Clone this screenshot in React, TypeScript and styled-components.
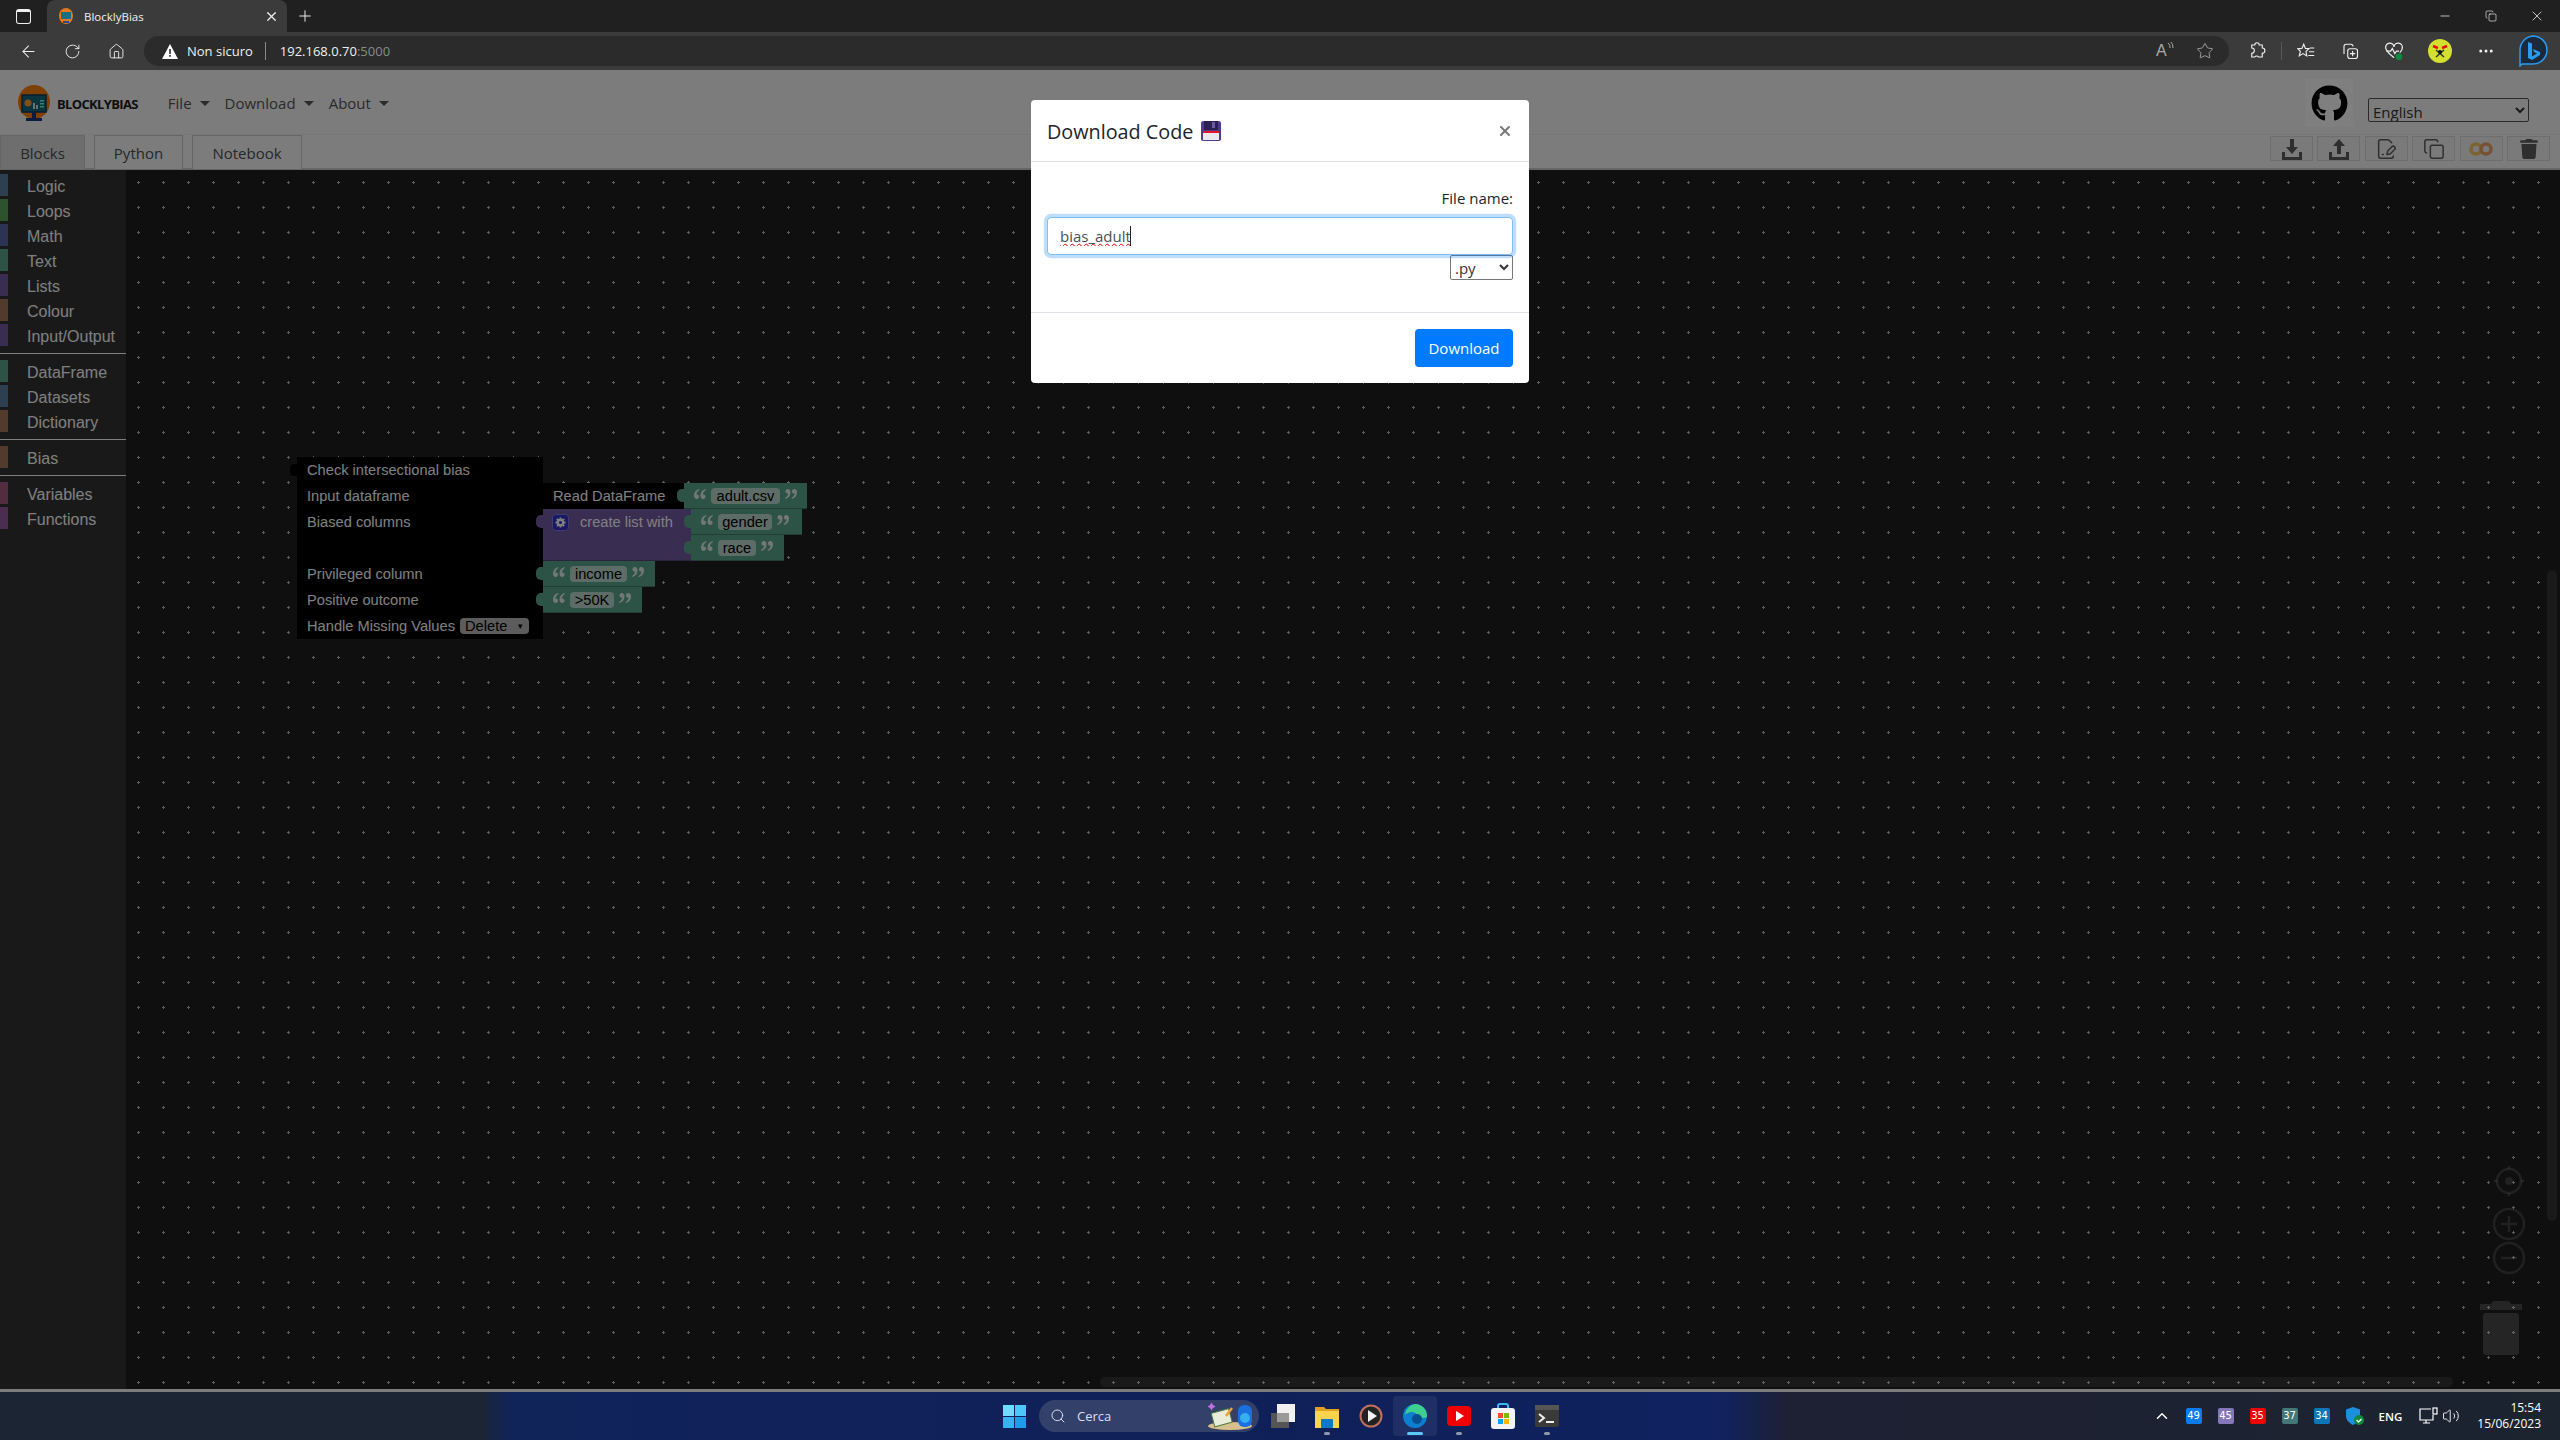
import React from "react";
import styled, { createGlobalStyle } from "styled-components";
import { ArrowLeft, RotateCw, Home, X, Plus, Star, Minus, Copy, MoreHorizontal, Search, ChevronUp, Volume2, FilePenLine } from "lucide-react";
import { FaGithub, FaTrash } from "react-icons/fa";

const GlobalStyle = createGlobalStyle`
	html, body {
		margin: 0;
		padding: 0;
		background: #202020;
		overflow: hidden;
	}
	* {
		box-sizing: border-box;
	}
`;

const UI_FONT = `"Open Sans", "Noto Sans", sans-serif`;
const BLOCK_FONT = `"Liberation Sans", Arial, sans-serif`;

const Screen = styled.div`
	width: 2560px;
	height: 1440px;
	display: flex;
	flex-direction: column;
	font-family: ${UI_FONT};
	overflow: hidden;
`;

/* browser chrome */
const TabStrip = styled.div`
	height: 32px;
	background: #202020;
	display: flex;
	align-items: flex-end;
	color: #f0f0f0;
`;

const TabsButton = styled.div`
	width: 47px;
	height: 32px;
	display: flex;
	align-items: center;
	justify-content: center;
`;

const TabsGlyph = styled.div`
	width: 15px;
	height: 15px;
	border: 1.5px solid #f0f0f0;
	border-top-width: 3px;
	border-radius: 3px;
`;

const ActiveTab = styled.div`
	width: 240px;
	height: 32px;
	background: #3b3b3b;
	border-radius: 8px 8px 0 0;
	display: flex;
	align-items: center;
	padding: 0 8px 0 12px;
	font-size: 11.5px;
`;

const TabTitle = styled.span`
	margin-left: 11px;
	flex: 1;
`;

const NewTab = styled.div`
	width: 36px;
	height: 32px;
	display: flex;
	align-items: center;
	justify-content: center;
`;

const WindowControls = styled.div`
	margin-left: auto;
	display: flex;
	align-items: center;
	height: 32px;
`;

const WindowButton = styled.div`
	width: 46px;
	height: 32px;
	display: flex;
	align-items: center;
	justify-content: center;
`;

const Toolbar = styled.div`
	height: 38px;
	background: #3b3b3b;
	display: flex;
	align-items: center;
	color: #f0f0f0;
	padding-left: 6px;
`;

const NavButton = styled.div`
	width: 44px;
	height: 30px;
	display: flex;
	align-items: center;
	justify-content: center;
`;

const AddressBar = styled.div`
	margin-left: 6px;
	width: 2085px;
	height: 30px;
	background: #2b2b2b;
	border-radius: 15px;
	display: flex;
	align-items: center;
	padding-left: 18px;
	font-size: 13px;
`;

const SecurityLabel = styled.span`
	margin-left: 9px;
`;

const AddressDivider = styled.span`
	width: 1px;
	height: 18px;
	background: #8a8a8a;
	margin: 0 14px 0 12px;
`;

const Port = styled.span`
	color: #8a8a8a;
`;

const AddressTools = styled.div`
	margin-left: auto;
	display: flex;
	gap: 20px;
	align-items: center;
	padding-right: 15px;
	color: #a8a8a8;
`;

const ReadAloud = styled.span`
	font-size: 16px;
	width: 20px;
	display: flex;
	align-items: flex-start;
	font-family: ${BLOCK_FONT};
`;

const ToolbarIcons = styled.div`
	display: flex;
	align-items: center;
	height: 30px;
	margin-left: 7px;
`;

const ToolSlot = styled.div<{ $w: number }>`
	width: ${(p) => p.$w}px;
	display: flex;
	align-items: center;
	justify-content: center;
`;

const ToolDivider = styled.span`
	width: 1px;
	height: 18px;
	background: #5a5a5a;
`;

/* page */
const Page = styled.div`
	position: relative;
	flex: 1;
	display: flex;
	flex-direction: column;
	background: #f8f9fa;
	min-height: 0;
`;

const NavBar = styled.div`
	height: 65px;
	padding: 15px 31px 0 18px;
	display: flex;
	align-items: flex-start;
	border-bottom: 1px solid #eee;
`;

const BrandName = styled.span`
	margin: 10px 0 0 7px;
	font-family: ${UI_FONT};
	font-weight: 700;
	font-size: 13px;
	letter-spacing: -0.65px;
	color: #1c1c1c;
`;

const Menu = styled.div`
	display: flex;
	margin: 6px 0 0 30px;
	gap: 15px;
`;

const MenuItem = styled.div`
	display: flex;
	align-items: center;
	gap: 8px;
	font-size: 15px;
	color: #555;
	line-height: 24px;

	&::after {
		content: "";
		border-top: 5px solid #555;
		border-left: 5px solid transparent;
		border-right: 5px solid transparent;
	}
`;

const NavRight = styled.div`
	margin-left: auto;
	display: flex;
	align-items: flex-start;
`;

const GithubLink = styled.div`
	width: 48px;
	height: 48px;
	margin-top: -6px;
	background: #fff;
	display: flex;
	align-items: center;
	justify-content: center;
	color: #000;
`;

const LanguageSelect = styled.select`
	width: 161px;
	height: 24px;
	margin: 13px 0 0 15px;
	font-family: ${UI_FONT};
	font-size: 15px;
	background: #f8f9fa;
	color: #333;
	border: 1px solid #555;
	border-radius: 2px;
	padding: 2px 0 0;
`;

const TabRow = styled.div`
	height: 35px;
	display: flex;
	justify-content: space-between;
	border-bottom: 2px solid #ccc;
`;

const TabList = styled.div`
	display: flex;
	gap: 9px;
`;

const TabButton = styled.div<{ $active?: boolean; $w: number }>`
	width: ${(p) => p.$w}px;
	height: 34px;
	display: flex;
	align-items: center;
	justify-content: center;
	font-size: 15px;
	color: #495057;
	background: ${(p) => (p.$active ? "#ddd" : "#f8f9fa")};
	border: 1px solid #ccc;
	border-bottom: none;
`;

const ActionBar = styled.div`
	display: flex;
	gap: 4.4px;
	padding: 1px 10px 0 0;
`;

const ActionButton = styled.div`
	width: 43px;
	height: 25px;
	border: 1px solid #dcdcdc;
	background: #f4f4f4;
	display: flex;
	align-items: center;
	justify-content: center;
	color: #5c5c5c;
`;

const ColabMark = styled.svg`
	opacity: 0.6;
`;

const Workspace = styled.div`
	flex: 1;
	display: flex;
	background: #1e1e1e;
	position: relative;
	min-height: 0;
`;

const Toolbox = styled.div`
	width: 126px;
	background: #333;
	padding-top: 3px;
	display: flex;
	flex-direction: column;
	position: relative;
	z-index: 2;
	font-family: ${BLOCK_FONT};
`;

const ToolboxRow = styled.div<{ $color: string }>`
	height: 25px;
	display: flex;
	align-items: center;
	padding: 3px 0 0 27px;
	font-size: 16px;
	color: #fff;
	position: relative;

	&::before {
		content: "";
		position: absolute;
		left: 0;
		top: 1px;
		width: 8px;
		height: 22px;
		background: ${(p) => p.$color};
	}
`;

const ToolboxSeparator = styled.div`
	height: 1px;
	background: #fff;
	margin: 5px 0;
`;

const Canvas = styled.div`
	flex: 1;
	position: relative;
	overflow: hidden;
`;

const GridLayer = styled.svg`
	position: absolute;
	left: -126px;
	top: 0;
	width: 2560px;
	height: 1220px;
`;

const BlockGroup = styled.div`
	position: absolute;
	left: 171px;
	top: 287px;
	display: flex;
	font-family: ${BLOCK_FONT};
	font-size: 14.67px;
	color: #fff;
`;

const MainBlock = styled.div`
	width: 246px;
	height: 182px;
	background: #000;
	position: relative;
	padding-left: 10px;
	display: flex;
	flex-direction: column;

	&::before {
		content: "";
		position: absolute;
		left: -7px;
		top: 7px;
		width: 8px;
		height: 12px;
		background: #000;
		border-radius: 4px 0 0 4px;
	}
`;

const MainRow = styled.div`
	height: 26px;
	display: flex;
	align-items: center;
`;

const Inputs = styled.div`
	padding-top: 26px;
	display: flex;
	flex-direction: column;
`;

const BlockRow = styled.div`
	display: flex;
`;

const Piece = styled.div<{ $bg: string; $w: number; $h?: number }>`
	width: ${(p) => p.$w}px;
	height: ${(p) => p.$h ?? 26}px;
	background: ${(p) => p.$bg};
	position: relative;
	display: flex;
	align-items: flex-start;
	padding-top: 5px;
	line-height: 16px;
	flex: none;
	box-shadow: inset 0 -1px 0 rgba(0, 0, 0, 0.25);

	&::before {
		content: "";
		position: absolute;
		left: -7px;
		top: 6px;
		width: 8px;
		height: 13px;
		background: ${(p) => p.$bg};
		border-radius: 5px 0 0 5px;
	}
`;

const PieceStack = styled.div`
	display: flex;
	flex-direction: column;
`;

const Label = styled.span<{ $pad: number }>`
	padding-left: ${(p) => p.$pad}px;
	white-space: nowrap;
`;

const QuoteMark = styled.svg<{ $gap: number }>`
	flex: none;
	margin: 1px 0 0 ${(p) => p.$gap}px;
	opacity: 0.85;
`;

const Field = styled.span<{ $w: number }>`
	width: ${(p) => p.$w}px;
	height: 16px;
	background: #bcd9cf;
	border-radius: 4px;
	color: #000;
	text-align: center;
	line-height: 16px;
	margin-left: 5px;
`;

const Dropdown = styled.span`
	margin-left: 5px;
	width: 69px;
	height: 16px;
	line-height: 16px;
	background: #b8b8b8;
	border-radius: 4px;
	color: #000;
	padding: 0 6px 0 5px;
	display: flex;
	justify-content: space-between;
`;

const DropdownArrow = styled.span`
	font-size: 9px;
`;

const GearButton = styled.span`
	width: 17px;
	height: 17px;
	margin-left: 9px;
	background: #3030c8;
	border: 1px solid #7a7ae0;
	border-radius: 4px;
	display: flex;
	align-items: center;
	justify-content: center;
`;

const ControlLayer = styled.svg`
	position: absolute;
	right: 32px;
	bottom: 3px;
	width: 48px;
	height: 220px;
`;

const ScrollV = styled.div`
	position: absolute;
	right: 3px;
	top: 400px;
	bottom: 168px;
	width: 10px;
	border-radius: 5px;
	background: rgba(255, 255, 255, 0.1);
`;

const ScrollH = styled.div`
	position: absolute;
	left: 974px;
	right: 107px;
	bottom: 2px;
	height: 10px;
	border-radius: 5px;
	background: rgba(255, 255, 255, 0.1);
`;

/* modal */
const Backdrop = styled.div`
	position: absolute;
	inset: 0;
	z-index: 10;
	background: rgba(0, 0, 0, 0.5);
	display: flex;
	justify-content: center;
	align-items: flex-start;
	padding-top: 30px;
`;

const Modal = styled.div`
	width: 498px;
	background: #fff;
	border-radius: 4px;
	color: #212529;
	display: flex;
	flex-direction: column;
`;

const ModalHeader = styled.div`
	height: 62px;
	padding: 0 16px;
	display: flex;
	align-items: center;
	border-bottom: 1px solid #dee2e6;
`;

const ModalTitle = styled.div`
	font-size: 19.8px;
	font-weight: 500;
	display: flex;
	align-items: center;
	gap: 8px;
	padding-top: 1px;
`;

const CloseButton = styled.div`
	margin-left: auto;
	color: #777;
	display: flex;
`;

const ModalBody = styled.div`
	padding: 24px 16px 32px;
	display: flex;
	flex-direction: column;
	align-items: flex-end;
	border-bottom: 1px solid #dee2e6;
`;

const FieldLabel = styled.label`
	font-size: 15px;
	line-height: 24px;
	margin-bottom: 7px;
`;

const InputWrap = styled.div`
	position: relative;
	width: 100%;
`;

const NameInput = styled.input`
	width: 100%;
	height: 38px;
	padding: 0 12px;
	font-family: ${UI_FONT};
	font-size: 15px;
	color: #495057;
	border: 1px solid #80bdff;
	border-radius: 4px;
	box-shadow: 0 0 0 3.2px rgba(0, 123, 255, 0.25);
	outline: none;
	text-decoration: underline wavy #e00 1px;
	text-decoration-skip-ink: none;
`;

const Caret = styled.span`
	position: absolute;
	left: 83px;
	top: 9px;
	width: 1px;
	height: 20px;
	background: #222;
`;

const ExtensionSelect = styled.select`
	width: 63px;
	height: 25px;
	font-family: ${UI_FONT};
	font-size: 15px;
	background: #fff;
	color: #333;
	border: 1px solid #767676;
	border-radius: 2px;
	padding: 0;
`;

const ModalFooter = styled.div`
	padding: 16px;
	display: flex;
	justify-content: flex-end;
`;

const PrimaryButton = styled.button`
	width: 98px;
	height: 38px;
	background: #007bff;
	border: none;
	border-radius: 4px;
	color: #fff;
	font-family: ${UI_FONT};
	font-size: 15px;
`;

/* taskbar */
const Taskbar = styled.div`
	height: 51px;
	border-top: 3px solid #7c7c7c;
	background: linear-gradient(
		90deg,
		#1b2533 0,
		#1b2533 480px,
		#11245a 510px,
		#0f2058 1280px,
		#102260 1720px,
		#1e2133 1790px,
		#1c2430 2560px
	);
	display: flex;
	align-items: center;
	position: relative;
	color: #fff;
	padding-left: 1003px;
`;

const StartButton = styled.svg`
	width: 23px;
	height: 23px;
	flex: none;
`;

const SearchPill = styled.div`
	width: 220px;
	height: 32px;
	margin-left: 13px;
	border-radius: 16px;
	background: #33406a;
	display: flex;
	align-items: center;
	padding-left: 11px;
	font-size: 13px;
	color: #dde;
`;

const SearchText = styled.span`
	margin-left: 11px;
`;

const SearchArt = styled.svg`
	margin-left: auto;
	margin-right: 5px;
`;

const AppIcons = styled.div`
	display: flex;
	margin-left: 2px;
`;

const AppTile = styled.div<{ $active?: boolean; $open?: boolean }>`
	width: 44px;
	height: 40px;
	display: flex;
	align-items: center;
	justify-content: center;
	position: relative;
	background: ${(p) => (p.$active ? "rgba(255,255,255,0.07)" : "transparent")};
	border-radius: 4px;

	&::after {
		content: "";
		display: ${(p) => (p.$open || p.$active ? "block" : "none")};
		position: absolute;
		bottom: 1px;
		left: 50%;
		transform: translateX(-50%);
		width: ${(p) => (p.$active ? 16 : 6)}px;
		height: 3px;
		border-radius: 2px;
		background: ${(p) => (p.$active ? "#5cc8f8" : "#8f97a8")};
	}
`;

const Tray = styled.div`
	margin-left: auto;
	display: flex;
	align-items: center;
	padding-right: 19px;
`;

const Badge = styled.span<{ $bg: string }>`
	width: 16px;
	height: 16px;
	margin-right: 16px;
	border-radius: 2px;
	background: ${(p) => p.$bg};
	font-family: "DejaVu Sans", sans-serif;
	font-size: 10px;
	line-height: 16px;
	text-align: center;
	color: #fff;
`;

const Lang = styled.span`
	font-size: 11.5px;
	font-weight: 600;
	margin: 0 17px 0 0;
`;

const TrayIcon = styled.span<{ $after?: number }>`
	display: flex;
	margin-right: ${(p) => p.$after ?? 6}px;
`;

const Clock = styled.div`
	text-align: right;
	font-size: 12px;
	line-height: 16px;
	margin-left: 17px;
`;

const TOOLBOX: ({ label: string; color: string } | "sep")[] = [
	{ label: "Logic", color: "#5b80a5" },
	{ label: "Loops", color: "#5ba55b" },
	{ label: "Math", color: "#5b67a5" },
	{ label: "Text", color: "#5ba58c" },
	{ label: "Lists", color: "#745ba5" },
	{ label: "Colour", color: "#a5745b" },
	{ label: "Input/Output", color: "#745ba5" },
	"sep",
	{ label: "DataFrame", color: "#5ba58c" },
	{ label: "Datasets", color: "#5b80a5" },
	{ label: "Dictionary", color: "#a5745b" },
	"sep",
	{ label: "Bias", color: "#a5745b" },
	"sep",
	{ label: "Variables", color: "#a55b80" },
	{ label: "Functions", color: "#995ba5" },
];

const BADGES = [
	{ n: 49, bg: "#0a7cf0" },
	{ n: 45, bg: "#8478b8" },
	{ n: 35, bg: "#f00000" },
	{ n: 37, bg: "#43787a" },
	{ n: 34, bg: "#0a78b8" },
];

const TEXT_GREEN = "#5ba58c";
const LIST_PURPLE = "#745ba5";

const Favicon = () => (
	<svg width="14" height="16" viewBox="0 0 14 16">
		<ellipse cx="7" cy="8" rx="7" ry="8" fill="#e8791a" />
		<rect x="2" y="4" width="10" height="7" fill="#1a6f80" />
		<rect x="4" y="13" width="6" height="2" fill="#2a4a90" />
	</svg>
);

const Logo = () => (
	<svg width="32" height="37" viewBox="0 0 32 37">
		<ellipse cx="16" cy="17" rx="16" ry="17" fill="#ff8000" />
		<rect x="4" y="10" width="24" height="17" fill="#156b7d" stroke="#0d3d66" strokeWidth="1.5" />
		<circle cx="10" cy="18" r="3.5" fill="#ffa030" />
		<rect x="15" y="18" width="2" height="6" fill="#dde" />
		<rect x="18" y="20" width="2" height="4" fill="#dde" />
		<rect x="22" y="15" width="4" height="1.5" fill="#7fd" />
		<rect x="22" y="18" width="4" height="1.5" fill="#7fd" />
		<rect x="22" y="21" width="4" height="1.5" fill="#7fd" />
		<rect x="14" y="27" width="4" height="6" fill="#123a80" />
		<rect x="8" y="33" width="16" height="3" fill="#123a80" />
	</svg>
);

const ArrowTray = ({ up }: { up?: boolean }) => (
	<svg width="22" height="22" viewBox="0 0 22 22" fill="currentColor">
		<path d="M1 14h3v5h14v-5h3v8H1z" />
		<path d={up ? "M11 1l6 7h-4v8H9V8H5z" : "M9 1h4v8h4l-6 7-6-7h4z"} />
	</svg>
);

const SaveIcon = () => (
	<svg width="20" height="20" viewBox="0 0 20 20">
		<rect width="20" height="20" rx="2.5" fill="#4f3a8c" />
		<rect x="3" y="0" width="14" height="9" fill="#2c2150" />
		<rect x="11" y="1" width="3" height="6" fill="#6a5aa0" />
		<rect x="2" y="10" width="16" height="2" fill="#e8112d" />
		<rect x="2" y="12" width="16" height="7" fill="#e8e8ee" />
	</svg>
);

const Gear = () => (
	<svg width="11" height="11" viewBox="0 0 24 24" fill="none" stroke="#fff" strokeWidth="5">
		<circle cx="12" cy="12" r="6" />
		<path d="M12 1v4M12 19v4M1 12h4M19 12h4M4 4l3 3M17 17l3 3M20 4l-3 3M7 17l-3 3" strokeWidth="4" />
	</svg>
);

const QUOTE_D =
	"M5 0C2 1 0 3 0 6.5 0 8.500 1 10 2.800 10 4.200 10 5 9 5 7.600 5 6 3.800 5.200 2.400 5.500 2.600 3.500 3.800 2 5.500 1z";

const Quote = ({ gap, closing }: { gap: number; closing?: boolean }) => (
	<QuoteMark $gap={gap} width="12" height="10" viewBox="0 0 12 10" fill="#fff">
		<g transform={closing ? "rotate(180 6 5)" : undefined}>
			<path d={QUOTE_D} />
			<path d={QUOTE_D} transform="translate(6.5 0)" />
		</g>
	</QuoteMark>
);

const TextBlock = ({ value, width, field }: { value: string; width: number; field: number }) => (
	<Piece $bg={TEXT_GREEN} $w={width}>
		<Quote gap={10} />
		<Field $w={field}>{value}</Field>
		<Quote gap={5} closing />
	</Piece>
);

const BlockWorkspace = () => (
	<BlockGroup>
		<MainBlock>
			<MainRow>Check intersectional bias</MainRow>
			<MainRow>Input dataframe</MainRow>
			<MainRow>Biased columns</MainRow>
			<MainRow />
			<MainRow>Privileged column</MainRow>
			<MainRow>Positive outcome</MainRow>
			<MainRow>
				Handle Missing Values
				<Dropdown>
					Delete
					<DropdownArrow>▾</DropdownArrow>
				</Dropdown>
			</MainRow>
		</MainBlock>
		<Inputs>
			<BlockRow>
				<Piece $bg="#000" $w={141}>
					<Label $pad={10}>Read DataFrame</Label>
				</Piece>
				<TextBlock value="adult.csv" width={123} field={69} />
			</BlockRow>
			<BlockRow>
				<Piece $bg={LIST_PURPLE} $w={148} $h={52}>
					<GearButton>
						<Gear />
					</GearButton>
					<Label $pad={11}>create list with</Label>
				</Piece>
				<PieceStack>
					<TextBlock value="gender" width={111} field={54} />
					<TextBlock value="race" width={93} field={38} />
				</PieceStack>
			</BlockRow>
			<TextBlock value="income" width={112} field={57} />
			<TextBlock value=">50K" width={99} field={44} />
		</Inputs>
	</BlockGroup>
);

const WorkspaceControls = () => (
	<ControlLayer viewBox="0 0 48 220">
		<g fill="none" stroke="#fff" strokeOpacity="0.16" strokeWidth="2.5">
			<circle cx="29" cy="15" r="12" />
			<path d="M29 0v3M29 27v3M14 15h3M41 15h3" />
			<circle cx="29" cy="58" r="15" />
			<path d="M21 58h16M29 50v16" />
			<circle cx="29" cy="92" r="15" />
			<path d="M21 92h16" />
		</g>
		<circle cx="29" cy="15" r="4" fill="#fff" fillOpacity="0.16" />
		<g fill="#fff" fillOpacity="0.2">
			<rect x="0" y="138" width="42" height="6" />
			<path d="M11 138c1-3 3-3 5-3h10c2 0 4 0 5 3z" />
			<rect x="3" y="147" width="36" height="42" rx="3" />
		</g>
	</ControlLayer>
);

const BrowserChrome = () => (
	<>
		<TabStrip>
			<TabsButton>
				<TabsGlyph />
			</TabsButton>
			<ActiveTab>
				<Favicon />
				<TabTitle>BlocklyBias</TabTitle>
				<X size={15} />
			</ActiveTab>
			<NewTab>
				<Plus size={18} strokeWidth={1.3} />
			</NewTab>
			<WindowControls>
				<WindowButton>
					<Minus size={14} strokeWidth={1.3} />
				</WindowButton>
				<WindowButton>
					<Copy size={12} strokeWidth={1.3} />
				</WindowButton>
				<WindowButton>
					<X size={16} strokeWidth={1.2} />
				</WindowButton>
			</WindowControls>
		</TabStrip>
		<Toolbar>
			<NavButton>
				<ArrowLeft size={19} strokeWidth={1.3} />
			</NavButton>
			<NavButton>
				<RotateCw size={17} strokeWidth={1.3} />
			</NavButton>
			<NavButton>
				<Home size={17} strokeWidth={1.3} />
			</NavButton>
			<AddressBar>
				<svg width="16" height="15" viewBox="0 0 16 15">
					<path d="M8 0l8 15H0z" fill="#fff" />
					<path d="M7.2 5h1.6v5H7.200zM7.200 11h1.600v1.700H7.200z" fill="#2b2b2b" />
				</svg>
				<SecurityLabel>Non sicuro</SecurityLabel>
				<AddressDivider />
				<span>
					192.168.0.70<Port>:5000</Port>
				</span>
				<AddressTools>
					<ReadAloud>
						A
						<svg width="7" height="10" viewBox="0 0 7 10" fill="none" stroke="currentColor" strokeWidth="1">
							<path d="M1 1a5 5 0 0 1 2 5M4 0a8 8 0 0 1 2 6" />
						</svg>
					</ReadAloud>
					<Star size={18} strokeWidth={1.2} />
				</AddressTools>
			</AddressBar>
			<ToolbarIcons>
				<ToolSlot $w={42}>
					<svg width="18" height="18" viewBox="0 0 24 24" fill="none" stroke="#f0f0f0" strokeWidth="1.5">
						<path d="M9 4a3 3 0 0 1 6 0h4v4a3 3 0 0 1 0 7v5h-5a3 3 0 0 0-5 0H5v-5a3 3 0 0 0 0-7V4z" />
					</svg>
				</ToolSlot>
				<ToolSlot $w={6}>
					<ToolDivider />
				</ToolSlot>
				<ToolSlot $w={44}>
					<svg width="18" height="18" viewBox="0 0 24 24" fill="none" stroke="#f0f0f0" strokeWidth="1.5">
						<path d="M9 3l2.200 5.500L16 9l-4 3.500 1 6-5-3-5 3 1.500-6L1 9l5.500-.5z" />
						<path d="M17 8h6M16 13h7M15 18h8" />
					</svg>
				</ToolSlot>
				<ToolSlot $w={44}>
					<svg width="18" height="18" viewBox="0 0 24 24" fill="none" stroke="#f0f0f0" strokeWidth="1.5">
						<path d="M4 16V6a3 3 0 0 1 3-3h6a3 3 0 0 1 3 3" />
						<rect x="9" y="9" width="13" height="13" rx="3" />
						<path d="M15.500 12v7M12 15.500h7" />
					</svg>
				</ToolSlot>
				<ToolSlot $w={44}>
					<svg width="20" height="20" viewBox="0 0 24 24" fill="none" stroke="#f0f0f0" strokeWidth="1.5">
						<path d="M12 20C6 15 2 12 2 8a5 5 0 0 1 10-1 5 5 0 0 1 10 1c0 2-1 4-3 6" />
						<path d="M3 12h5l2-3 3 6 2-3h3" />
						<circle cx="18" cy="19" r="4" fill="#0c8a3a" stroke="none" />
					</svg>
				</ToolSlot>
				<ToolSlot $w={47}>
					<svg width="24" height="24" viewBox="0 0 24 24">
						<circle cx="12" cy="12" r="12" fill="#d4e030" />
						<path d="M5 7l5 2M19 7l-5 2" stroke="#e01010" strokeWidth="2.500" />
						<path d="M8 18l8-7M16 18l-8-7" stroke="#333" strokeWidth="1.500" />
						<circle cx="12" cy="13" r="2" fill="#111" />
					</svg>
				</ToolSlot>
				<ToolSlot $w={46}>
					<MoreHorizontal size={18} />
				</ToolSlot>
				<ToolSlot $w={47}>
					<svg width="30" height="32" viewBox="0 0 30 32">
						<path d="M15 1a14 14 0 0 1 0 28H4l-2 2V15A14 14 0 0 1 15 1z" fill="#1a2a3a" stroke="#2a9cf0" strokeWidth="1.500" />
						<path d="M10 7l4 1.500v13l5-3-3-1.500-1-3 7 3v3l-8 5-4-2z" fill="#2a9cf0" />
					</svg>
				</ToolSlot>
			</ToolbarIcons>
		</Toolbar>
	</>
);

const TaskbarSection = () => (
	<Taskbar>
		<StartButton viewBox="0 0 23 23">
			<rect width="11" height="11" fill="#6fdcff" />
			<rect x="12" width="11" height="11" fill="#4cc8f8" />
			<rect y="12" width="11" height="11" fill="#36b4f0" />
			<rect x="12" y="12" width="11" height="11" fill="#1e9cea" />
		</StartButton>
		<SearchPill>
			<Search size={16} strokeWidth={1.5} />
			<SearchText>Cerca</SearchText>
			<SearchArt width="46" height="30" viewBox="0 0 46 30">
				<ellipse cx="22" cy="25" rx="22" ry="4" fill="#d8c08c" />
				<rect x="5" y="10" width="18" height="14" fill="#e8ecd8" stroke="#4a7a40" strokeWidth="1" transform="rotate(-15 13 18)" />
				<path d="M18 15l6-8" stroke="#f0a030" strokeWidth="2.500" />
				<path d="M2 4l1.500-2.500L5 4l2.500 1.500L5 7 3.500 9.500 2 7-.5 5.500z" fill="#c070e0" />
				<rect x="30" y="4" width="14" height="22" rx="6" fill="#1b6fe0" />
				<circle cx="37" cy="17" r="5" fill="#35b0f0" />
			</SearchArt>
		</SearchPill>
		<AppIcons>
			<AppTile>
				<svg width="24" height="24" viewBox="0 0 24 24">
					<rect x="0" y="9" width="18" height="18" fill="#555" />
					<rect x="6" y="0" width="18" height="18" fill="#f0f0f0" />
					<rect x="6" y="9" width="12" height="9" fill="#999" />
				</svg>
			</AppTile>
			<AppTile $open>
				<svg width="24" height="24" viewBox="0 0 24 24">
					<path d="M0 3h9l2 2h13v19H0z" fill="#e0a020" />
					<rect y="7" width="24" height="17" fill="#fcd34d" />
					<rect x="6" y="15" width="12" height="9" rx="1" fill="#0c79c4" />
				</svg>
			</AppTile>
			<AppTile>
				<svg width="24" height="24" viewBox="0 0 24 24">
					<circle cx="12" cy="12" r="10.500" fill="#222" stroke="#c07060" strokeWidth="2" />
					<path d="M9 6l9 6-9 6z" fill="#f0f0f0" />
				</svg>
			</AppTile>
			<AppTile $active>
				<svg width="24" height="24" viewBox="0 0 24 24">
					<circle cx="12" cy="12" r="12" fill="#0c7fd0" />
					<path d="M12 0a12 12 0 0 1 12 13c-3 2-9 1-10-2-2-4-8-4-12 0A12 12 0 0 1 12 0z" fill="#3ecf8e" />
					<circle cx="14" cy="15" r="5" fill="#0a4f90" />
				</svg>
			</AppTile>
			<AppTile $open>
				<svg width="24" height="20" viewBox="0 0 24 20">
					<rect width="24" height="20" rx="4" fill="#f00000" />
					<path d="M9 5l8 5-8 5z" fill="#fff" />
				</svg>
			</AppTile>
			<AppTile>
				<svg width="24" height="26" viewBox="0 0 24 26">
					<path d="M7 6V3a2 2 0 0 1 2-2h6a2 2 0 0 1 2 2v3" stroke="#3cb8f0" strokeWidth="2" fill="none" />
					<rect y="5" width="24" height="21" rx="3" fill="#f4f4f4" />
					<rect x="7" y="10" width="5" height="5" fill="#f25022" />
					<rect x="13" y="10" width="5" height="5" fill="#7fba00" />
					<rect x="7" y="16" width="5" height="5" fill="#00a4ef" />
					<rect x="13" y="16" width="5" height="5" fill="#ffb900" />
				</svg>
			</AppTile>
			<AppTile $open>
				<svg width="24" height="22" viewBox="0 0 24 22">
					<rect width="24" height="22" rx="2" fill="#3a3a3a" />
					<rect width="24" height="5" fill="#555" />
					<path d="M4 9l5 4-5 4" stroke="#f0f0f0" strokeWidth="2" fill="none" />
					<path d="M11 17h8" stroke="#f0f0f0" strokeWidth="2" />
				</svg>
			</AppTile>
		</AppIcons>
		<Tray>
			<TrayIcon $after={15}>
				<ChevronUp size={18} strokeWidth={2} />
			</TrayIcon>
			{BADGES.map((b) => (
				<Badge key={b.n} $bg={b.bg}>
					{b.n}
				</Badge>
			))}
			<TrayIcon $after={15}>
				<svg width="18" height="18" viewBox="0 0 18 18">
					<path d="M7 0l7 2.500V9c0 4-3 7-7 9-4-2-7-5-7-9V2.500z" fill="#1d8fe0" />
					<circle cx="13" cy="13" r="5" fill="#0f8a3a" />
					<path d="M10.500 13l2 2 3-3" stroke="#fff" strokeWidth="1.300" fill="none" />
				</svg>
			</TrayIcon>
			<Lang>ENG</Lang>
			<TrayIcon $after={3}>
				<svg width="20" height="18" viewBox="0 0 20 18" fill="none" stroke="#fff" strokeWidth="1.200">
					<path d="M12 2H1v11h13V8" />
					<path d="M7 13v3M4 16h7" />
					<rect x="14" y="1" width="4" height="6" />
				</svg>
			</TrayIcon>
			<TrayIcon $after={0}>
				<Volume2 size={18} strokeWidth={1.2} />
			</TrayIcon>
			<Clock>
				<div>15:54</div>
				<div>15/06/2023</div>
			</Clock>
		</Tray>
	</Taskbar>
);

const App: React.FunctionComponent = () => {
	return (
		<>
			<GlobalStyle />
			<Screen>
				<BrowserChrome />
				<Page>
					<NavBar>
						<Logo />
						<BrandName>BLOCKLYBIAS</BrandName>
						<Menu>
							<MenuItem>File</MenuItem>
							<MenuItem>Download</MenuItem>
							<MenuItem>About</MenuItem>
						</Menu>
						<NavRight>
							<GithubLink>
								<FaGithub size={37} />
							</GithubLink>
							<LanguageSelect defaultValue="English">
								<option>English</option>
							</LanguageSelect>
						</NavRight>
					</NavBar>
					<TabRow>
						<TabList>
							<TabButton $active $w={85}>Blocks</TabButton>
							<TabButton $w={89}>Python</TabButton>
							<TabButton $w={110}>Notebook</TabButton>
						</TabList>
						<ActionBar>
							<ActionButton>
								<ArrowTray />
							</ActionButton>
							<ActionButton>
								<ArrowTray up />
							</ActionButton>
							<ActionButton>
								<FilePenLine size={22} strokeWidth={1.6} />
							</ActionButton>
							<ActionButton>
								<Copy size={22} strokeWidth={1.6} />
							</ActionButton>
							<ActionButton>
								<ColabMark width="24" height="14" viewBox="0 0 24 14" fill="none" strokeWidth="3.500">
									<circle cx="7" cy="7" r="5" stroke="#f9ab00" />
									<circle cx="17" cy="7" r="5" stroke="#e8710a" />
								</ColabMark>
							</ActionButton>
							<ActionButton>
								<FaTrash size={20} />
							</ActionButton>
						</ActionBar>
					</TabRow>
					<Workspace>
						<Toolbox>
							{TOOLBOX.map((item, i) =>
								item === "sep" ? (
									<ToolboxSeparator key={i} />
								) : (
									<ToolboxRow key={item.label} $color={item.color}>
										{item.label}
									</ToolboxRow>
								)
							)}
						</Toolbox>
						<Canvas>
							<GridLayer>
								<defs>
									<pattern id="grid" width="25" height="25" patternUnits="userSpaceOnUse">
										<path d="M12 12.500h3M13.500 11v3" stroke="#bbb" strokeWidth="1" />
									</pattern>
								</defs>
								<rect width="2560" height="1220" fill="url(#grid)" />
							</GridLayer>
							<BlockWorkspace />
							<WorkspaceControls />
							<ScrollV />
							<ScrollH />
						</Canvas>
					</Workspace>
					<Backdrop>
						<Modal>
							<ModalHeader>
								<ModalTitle>
									Download Code <SaveIcon />
								</ModalTitle>
								<CloseButton>
									<X size={16} strokeWidth={3} />
								</CloseButton>
							</ModalHeader>
							<ModalBody>
								<FieldLabel>File name:</FieldLabel>
								<InputWrap>
									<NameInput defaultValue="bias_adult" spellCheck={false} />
									<Caret />
								</InputWrap>
								<ExtensionSelect defaultValue=".py">
									<option>.py</option>
								</ExtensionSelect>
							</ModalBody>
							<ModalFooter>
								<PrimaryButton>Download</PrimaryButton>
							</ModalFooter>
						</Modal>
					</Backdrop>
				</Page>
				<TaskbarSection />
			</Screen>
		</>
	);
};

export default App;
